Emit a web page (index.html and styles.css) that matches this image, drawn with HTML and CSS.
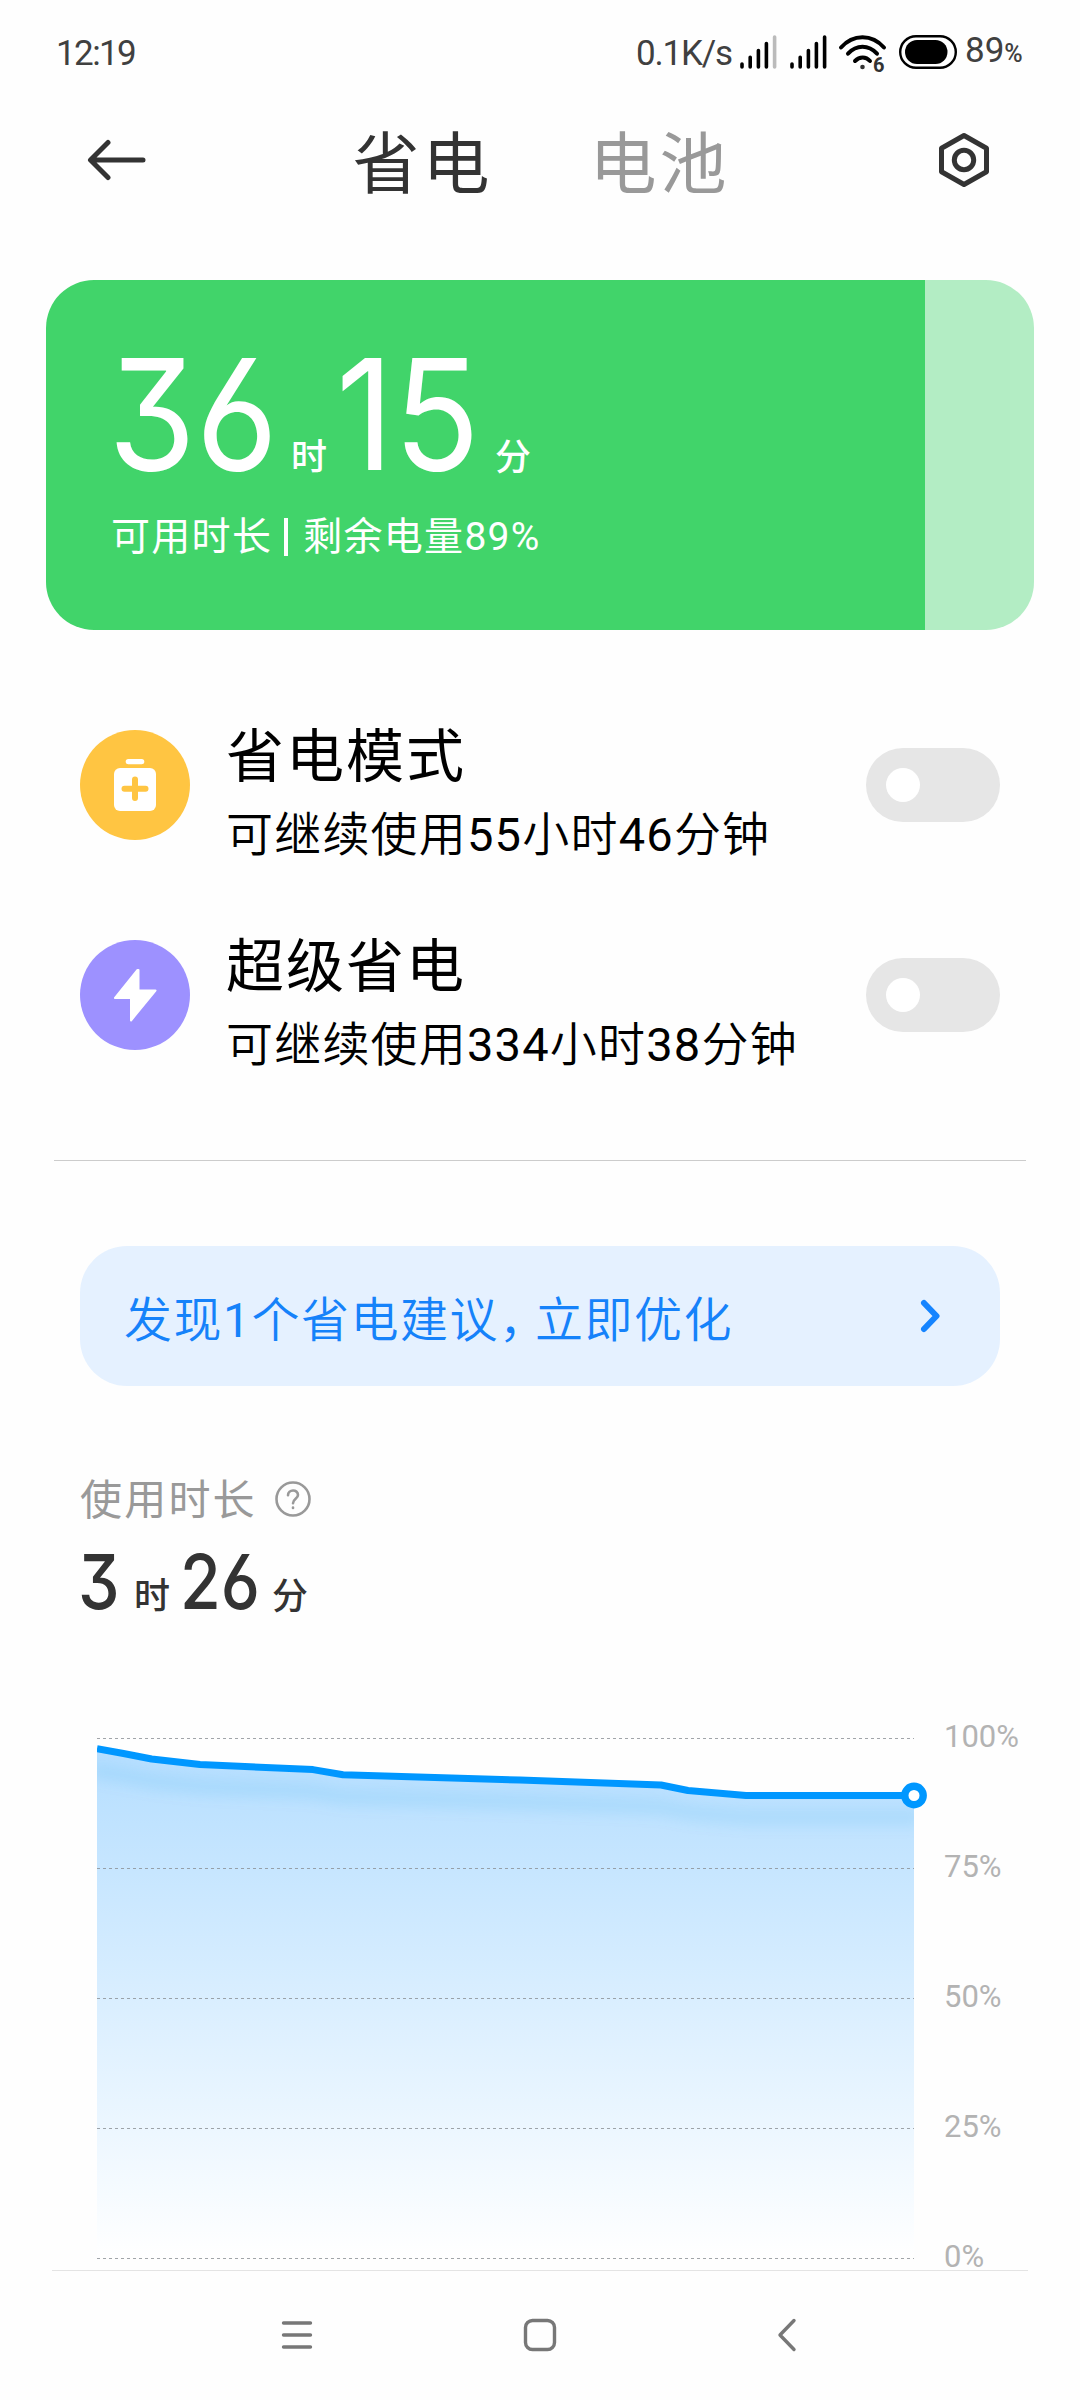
FILE: index.html
```html
<!DOCTYPE html>
<html lang="zh-CN">
<head>
  <meta charset="UTF-8">
  <title>省电与电池</title>
  <link rel="stylesheet" href="styles.css">
</head>
<body>
  <div class="status-bar">
    <span class="clock">12:19</span>
    <div class="status-icons">
      <span class="speed">0.1K/s</span>
      <svg class="signal" width="37" height="34" viewBox="0 0 37 34">
        <path d="M2 29v3M10.2 22.3v9.7M18.4 15.5v16.5M26.4 8.5v23.5" />
        <path class="weak" d="M34.6 2v30" />
      </svg>
      <svg class="signal second" width="37" height="34" viewBox="0 0 37 34">
        <path d="M2 29v3M10.2 22.3v9.7M18.4 15.5v16.5M26.4 8.5v23.5M34.6 2v30" />
      </svg>
      <svg class="wifi" width="47" height="38" viewBox="0 0 47 38">
        <path d="M2 12.5C14 -1.2 33 -1.2 45 12.5M9 18.7C17.5 9.5 29.5 9.5 38 18.7M16 26C20.5 21.3 27 21.3 31 26" />
        <circle cx="23.5" cy="32" r="2.3" />
        <text x="34" y="37">6</text>
      </svg>
      <svg class="battery" width="58" height="34" viewBox="0 0 58 34">
        <rect class="shell" x="1.2" y="1.2" width="55.6" height="31.6" rx="15.8" />
        <rect x="6" y="5" width="42.5" height="24" rx="12" />
      </svg>
      <span class="level">89<small>%</small></span>
    </div>
  </div>

  <div class="header">
    <svg width="60" height="44" viewBox="0 0 60 44">
      <path d="M56 22H4M21 4.500L3.500 22L21 39.500" />
    </svg>
    <div class="tabs">
      <span class="tab active">省电</span>
      <span class="tab">电池</span>
    </div>
    <svg width="52" height="56" viewBox="0 0 52 56">
      <path d="M26 3.500L48.500 16.200V39.800L26 52.500L3.500 39.800V16.200Z" />
      <circle cx="26" cy="28" r="9.700" />
    </svg>
  </div>

  <div class="battery-card">
    <div class="remain">
      <span class="num hours"><b>36</b></span>
      <span class="unit">时</span>
      <span class="num minutes"><b>15</b></span>
      <span class="unit">分</span>
    </div>
    <div class="remain-text"><span>可用时长</span><i></i><span>剩余电量89%</span></div>
  </div>

  <div class="modes">
    <div class="mode">
      <div class="mode-icon saver">
        <svg width="42" height="52" viewBox="0 0 42 52">
          <rect x="11.7" y="0" width="18.6" height="5.3" rx="2.6" />
          <rect x="0" y="9" width="42" height="43" rx="6" />
          <path d="M21 20.500v18.500M10.500 29.800h21" />
        </svg>
      </div>
      <div class="mode-text">
        <div class="mode-title">省电模式</div>
        <div class="mode-sub">可继续使用<em>55</em>小时<em>46</em>分钟</div>
      </div>
      <div class="toggle"><div class="knob"></div></div>
    </div>
    <div class="mode">
      <div class="mode-icon super">
        <svg width="44" height="54" viewBox="0 0 44 54">
          <path class="bolt" d="M24.500 2L2 30H18V52.500L42.500 22.500H25.500V2Z" />
        </svg>
      </div>
      <div class="mode-text">
        <div class="mode-title">超级省电</div>
        <div class="mode-sub">可继续使用<em>334</em>小时<em>38</em>分钟</div>
      </div>
      <div class="toggle"><div class="knob"></div></div>
    </div>
  </div>

  <div class="divider"></div>

  <div class="tip">
    <span>发现<em>1</em>个省电建议<span class="comma">，</span>立即优化</span>
    <svg width="24" height="36" viewBox="0 0 24 36">
      <path d="M5 5L17.500 18L5 31" />
    </svg>
  </div>

  <div class="usage">
    <div class="usage-label">
      <span>使用时长</span>
      <svg width="36" height="36" viewBox="0 0 36 36">
        <circle cx="18" cy="18" r="16.500" />
        <path d="M13 14.300C13 8 23 8 23 14C23 17.700 18 18 18 22.300" />
        <path d="M18 26.500v.4" />
      </svg>
    </div>
    <div class="usage-time">
      <span class="num one"><b>3</b></span>
      <span class="unit">时</span>
      <span class="num two"><b>26</b></span>
      <span class="unit">分</span>
    </div>
  </div>

  <div class="chart">
    <svg width="832" height="540" viewBox="0 0 832 540">
      <defs>
        <linearGradient id="fill" x1="0" y1="0" x2="0" y2="1">
          <stop offset="0" stop-color="#b5deff" />
          <stop offset="1" stop-color="#ffffff" />
        </linearGradient>
        <clipPath id="area">
          <path d="M0 28.700L26.500 33.500L54.700 39L103 44.400L216 49.600L246 54.800L423 60L564 65L591 70.500L649 75.500H817V538H0Z" />
        </clipPath>
        <filter id="soft" x="-5%" y="-100%" width="110%" height="300%">
          <feGaussianBlur stdDeviation="7" />
        </filter>
      </defs>
      <g clip-path="url(#area)">
        <rect x="0" y="28" width="817" height="510" fill="url(#fill)" />
        <path class="shadow" filter="url(#soft)" d="M0 50.700L26.500 55.500L54.700 61L103 66.400L216 71.600L246 76.800L423 82L564 87L591 92.500L649 97.500H817" />
      </g>
      <path class="grid" d="M0 18.500H817M0 148.500H817M0 278.500H817M0 408.500H817M0 538.500H817" />
      <path class="line" d="M0 28.700L26.500 33.500L54.700 39L103 44.400L216 49.600L246 54.800L423 60L564 65L591 70.500L649 75.500H817" />
      <circle class="dot" cx="817" cy="75.500" r="9.200" />
    </svg>
    <div class="scale">
      <span>100%</span>
      <span>75%</span>
      <span>50%</span>
      <span>25%</span>
      <span>0%</span>
    </div>
  </div>

  <div class="nav-bar">
    <svg width="34" height="34" viewBox="0 0 34 34">
      <path d="M3.500 5H30.500M3.500 17H30.500M3.500 29H30.500" />
    </svg>
    <svg width="34" height="34" viewBox="0 0 34 34">
      <rect x="2.500" y="2.500" width="29" height="29" rx="7" />
    </svg>
    <svg width="34" height="34" viewBox="0 0 34 34">
      <path d="M28 2.500L14 17L28 31.500" />
    </svg>
  </div>
</body>
</html>
```
FILE: styles.css
```css
* {
  box-sizing: border-box;
}

body {
  margin: 0;
  width: 1080px;
  height: 2400px;
  overflow: hidden;
  background: #fefefe;
  color: #333;
  font-family: Roboto, "Noto Sans CJK SC", sans-serif;
}

svg {
  display: block;
  flex: none;
  fill: none;
  stroke-linecap: round;
  stroke-linejoin: round;
}

/* digits inside the light Chinese lines */
em {
  font-style: normal;
  font-weight: 400;
}

/* status bar */
.status-bar {
  display: flex;
  justify-content: space-between;
  height: 104px;
  padding: 0 55px 0 56px;
  font-size: 35px;
  line-height: 108px;
  color: #404040;
}

.clock {
  letter-spacing: -1.6px;
}

.status-icons {
  display: flex;
  align-items: center;
}

.speed {
  width: 104px;
  margin-top: 3px;
  letter-spacing: -1.2px;
}

.signal {
  stroke: #000;
  stroke-width: 3.6;
}

.signal .weak {
  stroke: #bbb;
}

.signal.second {
  margin-left: 13px;
}

.wifi {
  margin: 4px 0 0 12px;
  overflow: visible;
  stroke: #000;
  stroke-width: 4;
}

.wifi circle,
.wifi text {
  fill: #333;
  stroke: none;
}

.wifi text {
  font: bold 20px Roboto, sans-serif;
}

.battery {
  margin-left: 13px;
  fill: #000;
}

.battery .shell {
  fill: none;
  stroke: #000;
  stroke-width: 2.4;
}

.level {
  width: 60px;
  margin: 1px 0 0 8px;
  white-space: nowrap;
}

.level small {
  font-size: 25px;
  font-weight: 500;
}

/* header */
.header {
  display: flex;
  align-items: center;
  justify-content: space-between;
  height: 112px;
  padding: 0 90px 0 87px;
}

.header svg {
  stroke: #333;
  stroke-width: 5;
}

.tabs {
  display: flex;
  gap: 97px;
  margin: 9px 3px 0 0;
  font-size: 67px;
  line-height: 100px;
  letter-spacing: 3px;
}

.tab {
  color: #999;
}

.tab.active {
  color: #333;
}

/* battery card */
.battery-card {
  height: 350px;
  margin: 64px 46px 0;
  padding: 57px 65px;
  border-radius: 48px;
  background: linear-gradient(to right, #41d46a 89%, #b3edc4 89%);
  color: #fff;
}

.remain,
.usage-time {
  display: flex;
  align-items: baseline;
}

.num {
  font-family: Inter, sans-serif;
  font-feature-settings: "cv03", "cv09";
}

.num b {
  display: inline-block;
  margin-left: -3px;
  font-weight: 400;
  transform: scaleX(0.92);
  transform-origin: left;
}

.remain .num {
  font-size: 154px;
  line-height: 154px;
}

.hours {
  width: 180px;
}

.minutes {
  width: 156px;
}

.unit {
  width: 48px;
  font-size: 36px;
  font-weight: 500;
  line-height: 50px;
}

.remain-text {
  display: flex;
  align-items: center;
  margin-top: 21px;
  font-size: 39px;
  line-height: 50px;
  letter-spacing: 1.3px;
}

.remain-text i {
  width: 4px;
  height: 38px;
  margin: 0 15px 0 12px;
  background: #fff;
}

/* power modes */
.modes {
  margin: 50px 80px 0;
}

.mode {
  display: flex;
  align-items: center;
  height: 210px;
}

.mode-icon {
  display: flex;
  align-items: center;
  justify-content: center;
  width: 110px;
  height: 110px;
  border-radius: 50%;
}

.mode-icon svg {
  fill: #fff;
}

.saver {
  background: #ffc542;
}

.saver path {
  stroke: #ffc542;
  stroke-width: 6;
}

.super {
  background: #9d91ff;
}

.bolt {
  stroke: #fff;
  stroke-width: 2;
}

.mode-text {
  flex: 1;
  padding: 21px 0 0 36px;
  color: #000;
  line-height: 78px;
}

.mode-title {
  font-size: 58px;
  letter-spacing: 2px;
}

.mode-sub {
  font-size: 47px;
  font-weight: 350;
  letter-spacing: 1.2px;
}

.toggle {
  width: 134px;
  height: 74px;
  padding: 20px;
  border-radius: 37px;
  background: #e6e6e6;
}

.knob {
  width: 34px;
  height: 34px;
  border-radius: 50%;
  background: #fff;
}

.divider {
  height: 1px;
  margin: 60px 54px 85px;
  background: #ccc;
}

/* suggestion */
.tip {
  display: flex;
  align-items: center;
  justify-content: space-between;
  height: 140px;
  margin: 0 80px;
  padding: 0 57px 1px 44px;
  border-radius: 47px;
  background: #e5f1ff;
  color: #1582fa;
  font-size: 48px;
  font-weight: 350;
  letter-spacing: 1.5px;
}

.tip .comma {
  letter-spacing: -12px;
}

.tip svg {
  stroke: #1584ff;
  stroke-width: 6;
}

/* usage */
.usage {
  height: 246px;
  margin: 88px 80px 0;
}

.usage-label {
  display: flex;
  align-items: center;
  gap: 18px;
  color: #999;
  font-size: 42px;
  line-height: 54px;
  letter-spacing: 2.2px;
}

.usage-label svg {
  margin-bottom: 4px;
  stroke: #999;
  stroke-width: 2.6;
}

.usage-time {
  margin-top: 15px;
}

.usage-time .num {
  font-size: 76px;
  line-height: 76px;
}

.usage-time .num b {
  margin-left: -2px;
  font-weight: 500;
  transform: scaleX(0.87);
}

.usage-time .one {
  width: 54px;
}

.usage-time .two {
  width: 90px;
}

/* chart */
.chart {
  display: flex;
  gap: 15px;
  height: 550px;
  margin-left: 97px;
}

.grid {
  stroke: #8a8f94;
  stroke-opacity: 0.8;
  stroke-dasharray: 3 3;
  stroke-linecap: butt;
}

.line {
  stroke: #0097ff;
  stroke-width: 7;
  stroke-linecap: butt;
}

.shadow {
  stroke: #0097e6;
  stroke-opacity: 0.1;
  stroke-width: 16;
}

.dot {
  fill: #fff;
  stroke: #0097ff;
  stroke-width: 7.4;
}

.scale {
  display: flex;
  flex-direction: column;
  color: #b3b3b3;
  font-size: 31px;
  line-height: 130px;
  margin-top: -48px;
}

/* navigation bar */
.nav-bar {
  display: flex;
  align-items: center;
  justify-content: space-between;
  height: 130px;
  margin: 0 52px;
  padding: 0 228px 2px;
  border-top: 1px solid #e4e4e4;
}

.nav-bar svg {
  stroke: #777;
  stroke-width: 3.4;
}
```
